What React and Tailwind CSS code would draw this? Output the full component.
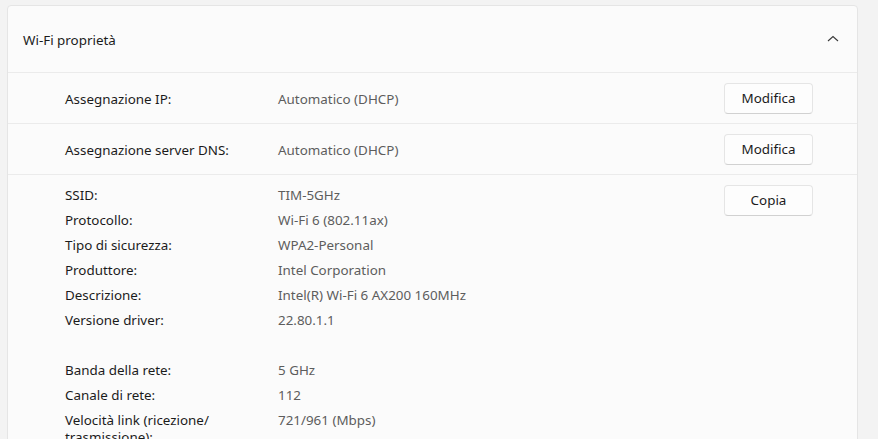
import React from 'react';

const font = { fontFamily: '"Segoe UI", "Noto Sans", "Open Sans", sans-serif' };

function Btn({ children }) {
  return (
    <button className="w-[89px] h-[31px] rounded-[4px] border border-[#e5e5e5] border-b-[#d1d1d1] bg-[#fdfdfd] text-[13.4px] text-[#1b1b1b]">
      {children}
    </button>
  );
}

const info = [
  ['SSID:', 'TIM-5GHz'],
  ['Protocollo:', 'Wi-Fi 6 (802.11ax)'],
  ['Tipo di sicurezza:', 'WPA2-Personal'],
  ['Produttore:', 'Intel Corporation'],
  ['Descrizione:', 'Intel(R) Wi-Fi 6 AX200 160MHz'],
  ['Versione driver:', '22.80.1.1'],
  null,
  ['Banda della rete:', '5 GHz'],
  ['Canale di rete:', '112'],
  ['Velocità link (ricezione/ trasmissione):', '721/961 (Mbps)'],
];

export default function App() {
  return (
    <div className="w-[878px] h-[439px] overflow-hidden bg-[#f3f3f3] pt-[5px] pl-[7px] pr-[20px]" style={font}>
      <div className="bg-[#fbfbfb] border border-[#e5e5e5] rounded-[4px] h-[600px]">
        {/* header */}
        <div className="h-[67px] flex items-center justify-between pl-[15px] pr-[18px] border-b border-[#ebebeb]">
          <span className="text-[13.4px] text-[#1b1b1b] pt-[2px]">Wi-Fi proprietà</span>
          <svg width="12" height="8" viewBox="0 0 12 8" fill="none">
            <path d="M1 6 L6 1.5 L11 6" stroke="#3a3a3a" strokeWidth="1.1" />
          </svg>
        </div>

        {[
          ['Assegnazione IP:', 'Automatico (DHCP)'],
          ['Assegnazione server DNS:', 'Automatico (DHCP)'],
        ].map(([l, v]) => (
          <div key={l} className="h-[51px] flex items-center pl-[57px] pr-[44px] border-b border-[#ebebeb] text-[13.4px]">
            <span className="w-[213px] text-[#1b1b1b] pt-[2px]">{l}</span>
            <span className="flex-1 text-[#5d5d5d] pt-[2px]">{v}</span>
            <Btn>Modifica</Btn>
          </div>
        ))}

        <div className="flex pl-[57px] pr-[44px] pt-[8px] text-[13.4px]">
          <div className="flex-1">
            {info.map((r, i) =>
              r ? (
                <div key={i} className="flex">
                  <span className="w-[213px] pr-[55px] text-[#1b1b1b] leading-[17px] py-[4px]">{r[0]}</span>
                  <span className="text-[#5d5d5d] leading-[17px] py-[4px]">{r[1]}</span>
                </div>
              ) : (
                <div key={i} className="h-[25px]" />
              )
            )}
          </div>
          <div className="pt-[2px]">
            <Btn>Copia</Btn>
          </div>
        </div>
      </div>
    </div>
  );
}
